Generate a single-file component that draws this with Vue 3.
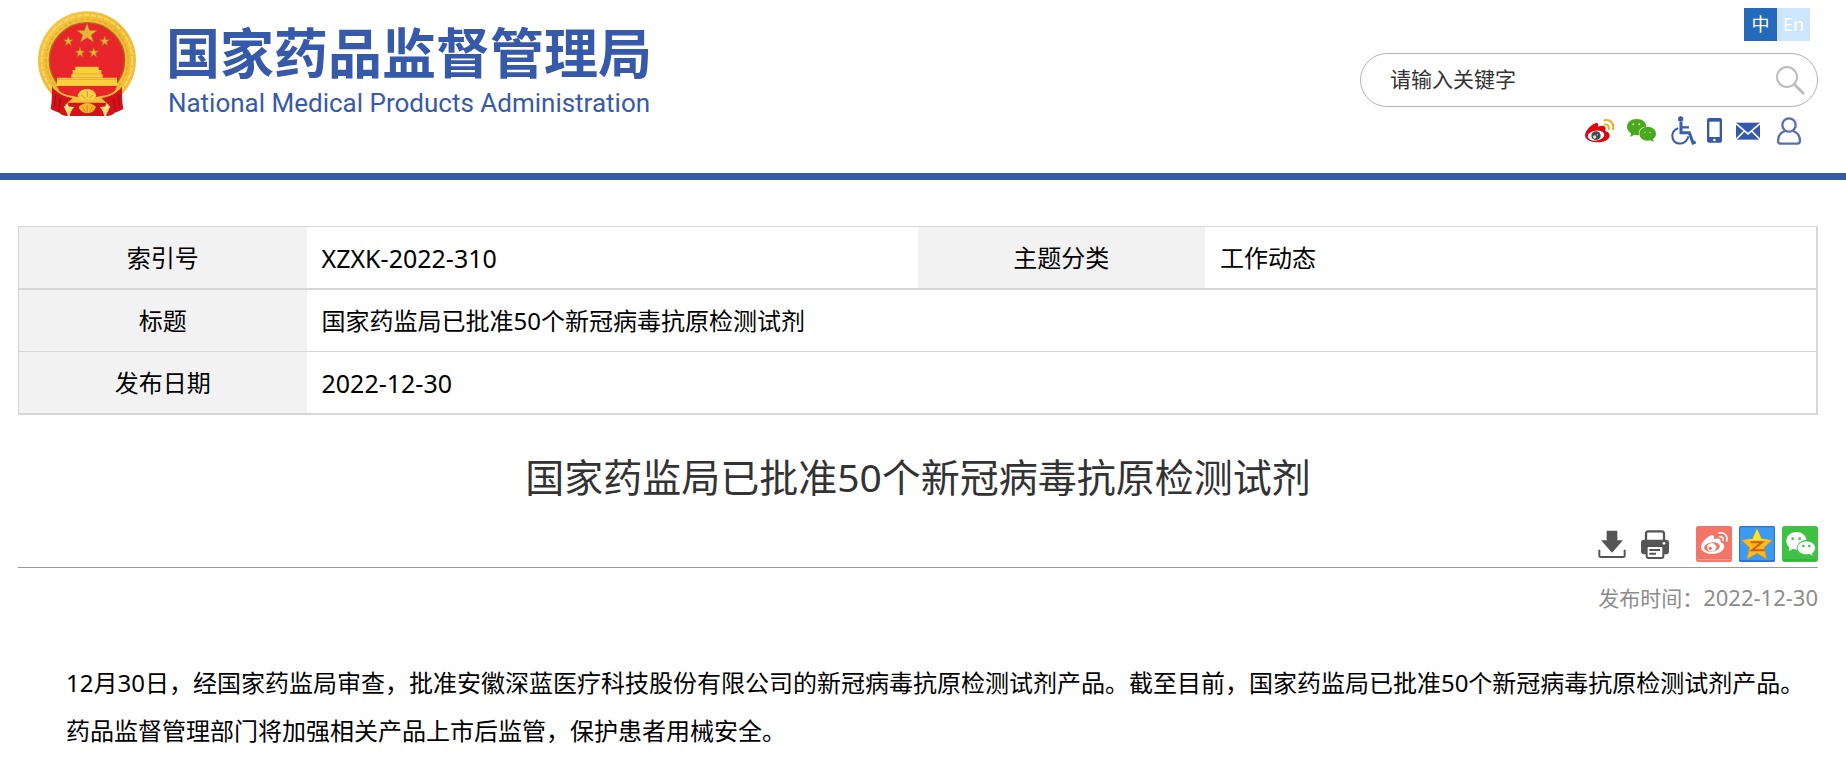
<script setup>
import { ref } from 'vue'

const keyword = ref('')
const headline = '国家药监局已批准50个新冠病毒抗原检测试剂'
const published = '2022-12-30'
</script>

<template>
  <div class="page">
    <header class="site-header">
      <a class="brand" href="#" aria-label="国家药品监督管理局">
        <svg class="emblem" viewBox="20 14 300 321" aria-hidden="true">
          <defs>
            <linearGradient id="gold" x1="0" y1="0" x2="1" y2="1">
              <stop offset="0" stop-color="#f5cb48" />
              <stop offset="0.5" stop-color="#efb832" />
              <stop offset="1" stop-color="#f5c33d" />
            </linearGradient>
          </defs>
          <circle cx="170" cy="165" r="147" fill="url(#gold)" />
          <circle cx="170" cy="165" r="136" fill="none" stroke="#f9d765" stroke-width="6" stroke-dasharray="16 5" />
          <circle cx="170" cy="165" r="123" fill="none" stroke="#e6ab2e" stroke-width="4" stroke-dasharray="12 6" />
          <circle cx="170" cy="165" r="113" fill="#e8252a" stroke="#a9681c" stroke-width="4" />
          <g fill="#e9b23a" stroke="#b5671e" stroke-width="2">
            <path d="M170 54l8 21 23 0-18 14 7 22-20-14-20 14 7-22-18-14 23 0z" />
            <path d="M114 92l4 11 11 0-9 7 3 11-9-7-9 7 3-11-9-7 11 0z" />
            <path d="M223 92l4 11 11 0-9 7 3 11-9-7-9 7 3-11-9-7 11 0z" />
            <path d="M149 126l4 11 11 0-9 7 3 11-9-7-9 7 3-11-9-7 11 0z" />
            <path d="M190 126l4 11 11 0-9 7 3 11-9-7-9 7 3-11-9-7 11 0z" />
          </g>
          <g fill="#fbcf3e">
            <path d="M135 184h70v10h8v13h4v10h-94v-10h4v-13h8z" />
            <path d="M80 217h180v25H80z" />
          </g>
          <path d="M128 206h84M80 222h180" stroke="#e8ad2f" stroke-width="3" />
          <path d="M80 242h180l-12 26-40 14h-76l-40-14z" fill="#e8252a" />
          <path d="M66 236c18 24 38 34 60 36l20 4 24-8 24 8 20-4c22-2 42-12 60-36l-6 34c-15 12-34 18-54 22h-88c-20-4-38-10-54-22z" fill="#f4c039" />
          <path d="M65 244c14 18 34 30 62 34l-22 20 8 34c-14 0-22-5-26-10-9-2-15-6-26-11 4-22 4-44 4-67z" fill="#d3131b" />
          <path d="M275 244c-14 18-34 30-62 34l22 20-8 34c14 0 22-5 26-10 9-2 15-6 26-11-4-22-4-44-4-67z" fill="#d3131b" />
          <path d="M113 292h114l-6 40h-102z" fill="#d3131b" />
          <path d="M76 266l-4 42M90 280l-5 38M264 266l4 42M250 280l5 38" stroke="#b00d16" stroke-width="4" />
          <path d="M142 272c4-28 52-28 56 0l-14 14-14-6-14 6z" fill="#fbd248" />
          <path d="M153 269l12 10M171 255v20M188 269l-11 10" stroke="#d99727" stroke-width="3" />
          <path d="M100 302l32 3c-8 8-12 18-14 27-9-6-12-16-18-30zM240 302l-32 3c8 8 12 18 14 27 9-6 12-16 18-30z" fill="#fbdf78" />
          <path d="M145 305c16-16 36-16 52 0-6 14-14 18-26 18s-22-5-26-18z" fill="#f3b62d" />
          <path d="M157 305l8 14M171 300v20M186 305l-8 14" stroke="#d48721" stroke-width="3" />
        </svg>
        <span class="brand-text">
          <span class="brand-cn">国家药品监督管理局</span>
          <span class="brand-en">National Medical Products Administration</span>
        </span>
      </a>

      <div class="header-side">
        <nav class="lang" aria-label="语言">
          <a class="active" href="#">中</a>
          <a href="#">En</a>
        </nav>
        <form class="search" role="search" @submit.prevent>
          <input v-model="keyword" type="text" placeholder="请输入关键字" aria-label="请输入关键字" />
          <button type="submit" aria-label="搜索">
            <svg width="30" height="30" viewBox="0 0 30 30" fill="none" stroke="#bdbdbd" stroke-width="2">
              <circle cx="12" cy="12" r="10" />
              <path d="M19 19l10 10" stroke-width="3" />
            </svg>
          </button>
        </form>
        <nav class="quick" aria-label="快捷入口">
          <a href="#" aria-label="微博">
            <svg width="30" height="30" viewBox="75 33 90 90">
              <path d="M75 91c0-14 22-36 34-37 8 0 6 8 5 11 9-4 23-6 23 6 0 3-2 5-1 7 7 2 13 6 13 14 0 13-19 20-39 20-20 0-35-9-35-21z" fill="#e0040f" />
              <ellipse cx="108" cy="92" rx="25" ry="15" fill="#fff" transform="rotate(-8 108 92)" />
              <ellipse cx="108" cy="92" rx="14" ry="13" fill="#4a4a4c" />
              <circle cx="104" cy="96" r="5" fill="#ddd" />
              <circle cx="112" cy="89" r="2" fill="#ddd" />
              <path d="M133 46c17-5 30 9 26 27M134 59c9-2 14 4 12 13" fill="none" stroke="#eeb01f" stroke-width="6" stroke-linecap="round" />
            </svg>
          </a>
          <a href="#" aria-label="微信">
            <svg width="31" height="30" viewBox="198 33 93 90">
              <path d="M230 42c17 0 29 10 29 23-15 0-25 10-22 25-5 1-10 0-14-1l-12 7 2-12c-7-4-12-11-12-19 0-13 12-23 29-23z" fill="#49a91d" />
              <path d="M263 65c14 0 25 9 25 21 0 7-4 12-9 16l2 9-10-5c-18 4-33-6-33-20 0-12 11-21 25-21z" fill="#49a91d" />
              <g fill="#d8f5b8"><circle cx="220" cy="58" r="3" /><circle cx="238" cy="58" r="3" /><circle cx="255" cy="82" r="2" /><circle cx="270" cy="82" r="2" /></g>
            </svg>
          </a>
          <a href="#" aria-label="无障碍">
            <svg width="28" height="30" viewBox="324 33 84 90" fill="none" stroke="#3a5dad" stroke-width="7">
              <circle cx="362" cy="42" r="8" fill="#3a5dad" stroke="none" />
              <path d="M363 50v33h25l11 31 8-3" stroke-width="9" />
              <path d="M364 67h23" />
              <path d="M355 70c-14 3-21 17-17 30 6 19 33 22 44 2l3-8" stroke-width="6" />
            </svg>
          </a>
          <a href="#" aria-label="移动版">
            <svg width="16" height="30" viewBox="441 33 48 90">
              <rect x="441" y="39" width="45" height="74" rx="6" fill="#3559aa" />
              <path d="M448 50h31v46h-31z" fill="#fff" />
              <circle cx="463" cy="105" r="4" fill="#fff" />
            </svg>
          </a>
          <a href="#" aria-label="邮箱">
            <svg width="28" height="30" viewBox="522 33 84 90">
              <path d="M528 53h72v51h-72z" fill="#3559aa" />
              <path d="M528 56l36 31 36-31M528 103l25-25M600 103l-25-25" fill="none" stroke="#fff" stroke-width="5" />
            </svg>
          </a>
          <a href="#" aria-label="个人中心">
            <svg width="30" height="30" viewBox="639 33 90 90" fill="none" stroke="#5a6db4" stroke-width="7">
              <circle cx="687" cy="60" r="20" />
              <path d="M675 78c-13 4-20 15-21 28 0 7 2 10 8 10h50c6 0 8-3 8-10-1-13-8-24-21-28" />
            </svg>
          </a>
        </nav>
      </div>
    </header>

    <main class="content">
      <table class="meta">
        <colgroup>
          <col class="col-label" /><col /><col class="col-label" /><col />
        </colgroup>
        <tbody>
          <tr>
            <th scope="row">索引号</th>
            <td class="code">XZXK-2022-310</td>
            <th scope="row">主题分类</th>
            <td>工作动态</td>
          </tr>
          <tr>
            <th scope="row">标题</th>
            <td colspan="3">{{ headline }}</td>
          </tr>
          <tr>
            <th scope="row">发布日期</th>
            <td class="code" colspan="3">{{ published }}</td>
          </tr>
        </tbody>
      </table>

      <article>
        <h1>{{ headline }}</h1>
        <div class="tools">
          <div class="actions">
            <button type="button" aria-label="下载">
              <svg width="28" height="36" viewBox="114 51 84 108" fill="#555">
                <path d="M140 65h32v29h17l-33 37-33-37h17z" />
                <path d="M118 122v18q0 4 4 4h68q4 0 4-4v-18" fill="none" stroke="#555" stroke-width="6" />
              </svg>
            </button>
            <button type="button" aria-label="打印">
              <svg width="28" height="36" viewBox="243 51 84 108">
                <rect x="258" y="67" width="54" height="40" rx="7" fill="#fff" stroke="#555" stroke-width="7" />
                <rect x="243" y="92" width="84" height="44" rx="9" fill="#555" />
                <circle cx="312" cy="103" r="4" fill="#fff" />
                <rect x="260" y="111" width="50" height="36" rx="5" fill="#fff" stroke="#555" stroke-width="6" />
                <path d="M268 123h32M268 134h20" stroke="#555" stroke-width="6" />
              </svg>
            </button>
          </div>
          <div class="share">
            <a href="#" aria-label="分享到微博">
              <svg width="36" height="36" viewBox="411 51 108 108">
                <rect x="411" y="51" width="108" height="108" rx="6" fill="#f27567" />
                <path d="M415 152h100" stroke="#f9a79d" stroke-width="3" />
                <path d="M426 115c0-15 22-36 33-36 8 0 7 7 5 12 11-5 23-4 21 9 7 2 11 6 11 12 0 13-16 23-36 23-19 0-34-8-34-20z" fill="#fff" />
                <ellipse cx="459" cy="114" rx="24" ry="14" fill="#f27567" transform="rotate(-8 459 114)" />
                <ellipse cx="458" cy="115" rx="14" ry="12" fill="#fff" />
                <circle cx="454" cy="118" r="5" fill="#f27567" />
                <path d="M480 72c16-4 27 8 23 24M482 83c8-1 12 4 10 11" fill="none" stroke="#fff" stroke-width="5" stroke-linecap="round" />
              </svg>
            </a>
            <a href="#" aria-label="分享到QQ空间">
              <svg width="36" height="36" viewBox="537 51 108 108">
                <rect x="537" y="51" width="108" height="108" rx="5" fill="#2c6fd6" />
                <rect x="540" y="55" width="102" height="99" rx="4" fill="#3c9bf0" />
                <path d="M591 60l13 30 32 4-24 22 8 34-29-17-30 17 8-34-24-22 33-4z" fill="#fdbb18" stroke="#e8901a" stroke-width="2" />
                <path d="M591 60l13 30 32 4-91 0 33-4z" fill="#ffe22c" />
                <path d="M572 100h34l-30 24h38" fill="none" stroke="#cf5a12" stroke-width="6" />
              </svg>
            </a>
            <a href="#" aria-label="分享到微信">
              <svg width="36" height="36" viewBox="666 51 108 108">
                <rect x="666" y="51" width="108" height="108" rx="8" fill="#3fc144" />
                <path d="M670 153h100" stroke="#2ca534" stroke-width="3" />
                <path d="M709 69c17 0 29 10 30 24-18 1-30 12-27 29l-14-2-12 7 2-12c-6-5-9-12-9-19 0-15 13-27 30-27z" fill="#fff" />
                <path d="M739 96c15 0 27 9 27 21 0 7-4 12-9 16l2 8-10-5c-19 4-37-5-37-19 0-12 12-21 27-21z" fill="#fff" stroke="#3fc144" stroke-width="2" />
                <g fill="#3fc144"><circle cx="698" cy="89" r="4" /><circle cx="719" cy="89" r="4" /><circle cx="730" cy="111" r="4" /><circle cx="748" cy="111" r="4" /></g>
              </svg>
            </a>
          </div>
        </div>
        <p class="time">发布时间：<time :datetime="published">{{ published }}</time></p>
        <p class="body-text">12月30日，经国家药监局审查，批准安徽深蓝医疗科技股份有限公司的新冠病毒抗原检测试剂产品。截至目前，国家药监局已批准50个新冠病毒抗原检测试剂产品。药品监督管理部门将加强相关产品上市后监管，保护患者用械安全。</p>
      </article>
    </main>
  </div>
</template>

<style>
body {
  background: #fff;
}
</style>

<style scoped>
.page {
  font-family: "Noto Sans", "Noto Sans CJK SC", sans-serif;
  font-size: 24px;
  color: #000;
}

a {
  color: inherit;
  text-decoration: none;
}

svg {
  display: block;
}

button {
  padding: 0;
  border: 0;
  background: none;
  cursor: pointer;
}

.site-header {
  display: flex;
  justify-content: space-between;
  align-items: flex-start;
  min-height: 173px;
  padding: 0 28px 0 37px;
  border-bottom: 7px solid #3759a9;
}

.brand {
  display: flex;
  align-items: flex-start;
  gap: 29px;
  padding-top: 10px;
  color: #3759a9;
}

.emblem {
  width: 100px;
  height: 107px;
}

.brand-text {
  display: flex;
  flex-direction: column;
  align-items: center;
  padding-top: 10px;
  white-space: nowrap;
}

.brand-cn {
  font-family: "Noto Sans CJK SC", sans-serif;
  font-size: 54px;
  font-weight: 700;
  line-height: 62px;
}

.brand-en {
  font-family: Roboto, "Liberation Sans", sans-serif;
  font-size: 26px;
  line-height: 42px;
}

.header-side {
  display: flex;
  flex-direction: column;
  align-items: flex-end;
  padding-top: 8px;
}

.lang {
  display: flex;
  margin-right: 8px;
  font-size: 18px;
  line-height: 32px;
  text-align: center;
}

.lang a {
  width: 33px;
  height: 33px;
  background: #cde6ff;
  color: #fff;
}

.lang .active {
  background: #2569ba;
}

.search {
  display: flex;
  align-items: center;
  box-sizing: border-box;
  width: 458px;
  height: 54px;
  margin-top: 12px;
  padding: 0 12px 0 29px;
  border: 1px solid #b3b3b3;
  border-radius: 27px;
}

.search input {
  flex: 1;
  min-width: 0;
  padding: 0 0 2px;
  border: 0;
  outline: 0;
  background: none;
  font-family: inherit;
  font-size: 21px;
  line-height: 30px;
  color: #333;
}

.search input::placeholder {
  color: #333;
  opacity: 1;
}

.quick {
  display: flex;
  gap: 11px;
  margin: 9px 15px 0 0;
}

.content {
  padding: 46px 28px 0 18px;
}

.meta {
  width: 100%;
  table-layout: fixed;
  border-collapse: separate;
  border-spacing: 0;
  border: 1px solid #d6d6d6;
  border-right-width: 2px;
  border-bottom-width: 2px;
}

.col-label {
  width: 16%;
}

.meta th,
.meta td {
  height: 61px;
  padding: 0 15px;
  border-bottom: 1px solid #d6d6d6;
  font-weight: 400;
  line-height: 36px;
  text-align: left;
}

.meta th {
  background: #f2f2f2;
  text-align: center;
}

.meta .code {
  font-size: 25px;
}

.meta tr:first-child > * {
  border-bottom-width: 2px;
}

.meta tr:last-child > * {
  border-bottom: 0;
}

h1 {
  margin: 34px 0 21px;
  font-size: 39px;
  font-weight: 400;
  line-height: 56px;
  text-align: center;
  color: #333;
}

.tools {
  display: flex;
  justify-content: flex-end;
  gap: 27px;
  padding-bottom: 5px;
  border-bottom: 1px solid #999;
}

.actions {
  display: flex;
  gap: 15px;
}

.share {
  display: flex;
  gap: 7px;
}

.time {
  margin: 14px 0 0;
  font-size: 21px;
  line-height: 30px;
  text-align: right;
  color: #8c8c8c;
}

.time time {
  font-size: 22px;
}

.body-text {
  margin: 46px 0 0;
  padding-left: 48px;
  line-height: 48px;
}
</style>
